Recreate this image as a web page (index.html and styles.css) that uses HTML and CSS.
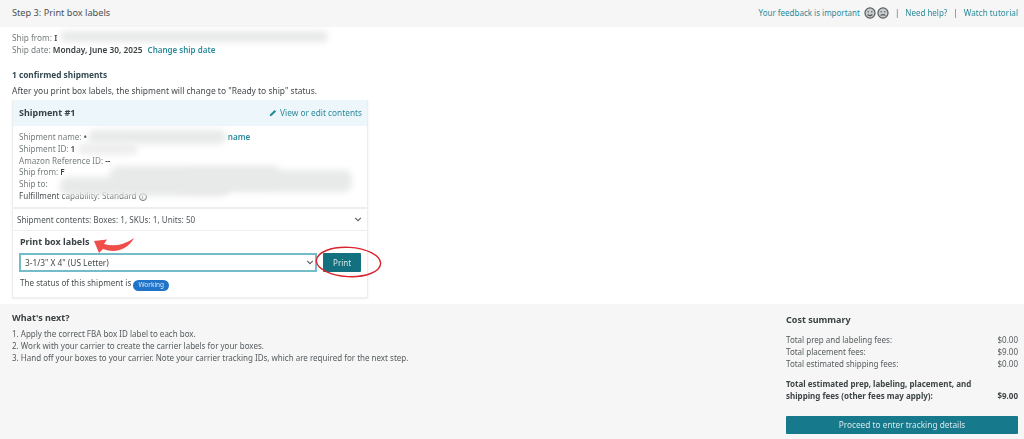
FILE: index.html
```html
<!DOCTYPE html>
<html lang="en">
<head>
<meta charset="utf-8">
<title>Step 3: Print box labels</title>
<link rel="stylesheet" href="styles.css">
</head>
<body>
<div class="page">
  <header class="topbar">
    <div class="step-title">Step 3: Print box labels</div>
    <nav class="top-links">
      <a>Your feedback is important</a>
      <span class="faces">
        <svg class="face" viewBox="0 0 10 10"><circle cx="5" cy="5" r="4.2"/><circle class="eye" cx="3.5" cy="4" r=".6"/><circle class="eye" cx="6.5" cy="4" r=".6"/><path d="M3 6.2q2 1.8 4 0"/></svg>
        <svg class="face" viewBox="0 0 10 10"><circle cx="5" cy="5" r="4.2"/><circle class="eye" cx="3.5" cy="4" r=".6"/><circle class="eye" cx="6.5" cy="4" r=".6"/><path d="M3 7.2q2-1.8 4 0"/></svg>
      </span>
      <span class="sep">|</span>
      <a>Need help?</a>
      <span class="sep">|</span>
      <a class="watch">Watch tutorial</a>
    </nav>
  </header>

  <main class="content">
    <div class="ship-meta">
      <div><span class="muted">Ship from:</span> <span class="strong">I</span></div>
      <div><span class="muted">Ship date:</span> <span class="strong">Monday, June 30, 2025</span> <a class="link-strong">Change ship date</a></div>
    </div>
    <h2 class="confirmed">1 confirmed shipments</h2>
    <p class="intro">After you print box labels, the shipment will change to "Ready to ship" status.</p>

    <section class="card">
      <div class="card-head">
        <span class="card-title">Shipment #1</span>
        <a class="edit">
          <svg class="pencil" viewBox="0 0 10 10"><path d="M1 9l.5-2.4L7 1.1 8.900 3 3.400 8.500z"/></svg>
          View or edit contents
        </a>
      </div>
      <div class="details">
        <div class="detail-line"><span class="muted">Shipment name:</span> <span class="strong">•</span> <a class="name-link">name</a></div>
        <div class="detail-line"><span class="muted">Shipment ID:</span> <span class="strong">1</span></div>
        <div class="detail-line"><span class="muted">Amazon Reference ID:</span> <span class="strong">--</span></div>
        <div class="detail-line"><span class="muted">Ship from:</span> <span class="strong">F</span></div>
        <div class="detail-line"><span class="muted">Ship to:</span></div>
        <div class="detail-line capability">Fulfillment capability: Standard <span class="info">i</span></div>
      </div>
      <div class="contents-row">
        <span>Shipment contents: Boxes: 1, SKUs: 1, Units: 50</span>
        <svg class="chev" viewBox="0 0 10 6"><path d="M1.500 1L5 4.500 8.500 1"/></svg>
      </div>
      <div class="print-box">
        <h3 class="print-title">Print box labels</h3>
        <div class="print-row">
          <div class="select">
            <span>3-1/3" X 4" (US Letter)</span>
            <svg class="chev" viewBox="0 0 10 6"><path d="M1.500 1L5 4.500 8.500 1"/></svg>
          </div>
          <button class="print-btn">Print</button>
        </div>
        <div class="status"><span>The status of this shipment is</span><span class="badge">Working</span></div>
      </div>
    </section>
  </main>

  <footer class="bottom">
    <div class="next">
      <h3 class="next-title">What's next?</h3>
      <ol class="steps">
        <li>1. Apply the correct FBA box ID label to each box.</li>
        <li>2. Work with your carrier to create the carrier labels for your boxes.</li>
        <li>3. Hand off your boxes to your carrier. Note your carrier tracking IDs, which are required for the next step.</li>
      </ol>
    </div>
    <aside class="cost">
      <h3 class="cost-title">Cost summary</h3>
      <div class="cost-row"><span>Total prep and labeling fees:</span><span>$0.00</span></div>
      <div class="cost-row"><span>Total placement fees:</span><span>$9.00</span></div>
      <div class="cost-row"><span>Total estimated shipping fees:</span><span>$0.00</span></div>
      <div class="cost-total"><span>Total estimated prep, labeling, placement, and shipping fees (other fees may apply):</span><span>$9.00</span></div>
      <button class="proceed">Proceed to enter tracking details</button>
    </aside>
  </footer>

  <div class="smear smear-from"></div>
  <div class="smear smear-name"></div>
  <div class="smear smear-id"></div>
  <div class="smear smear-addr"></div>
  <div class="smear smear-addr2"></div>
  <div class="smear smear-addr3"></div>
  <svg class="annot annot-arrow" viewBox="0 0 44 20"><path d="M2 5L15 3.500 12 8C22 11 32 9 42 2 36 13 24 18 11 13L7 17z"/></svg>
  <svg class="annot annot-ring" viewBox="0 0 72 36"><ellipse cx="36" cy="18" rx="34" ry="15.500" transform="rotate(3 36 18)"/></svg>
</div>
</body>
</html>
```
FILE: styles.css
```css
* { box-sizing: border-box; }
html, body { margin: 0; padding: 0; }
body {
  font-family: "Noto Sans", "Open Sans", sans-serif;
  font-size: 8.450px;
  line-height: 12px;
  color: #44494b;
  background: #fff;
}
.page { position: relative; width: 1024px; height: 439px; overflow: hidden; display: flex; flex-direction: column; filter: blur(.4px); }
h2, h3, p, ol { margin: 0; padding: 0; }
ol { list-style: none; }
a { color: #2b8a9a; }
.muted { color: #767d7f; }
.strong { font-weight: 600; color: #3a4042; }

.topbar { height: 27px; flex: none; background: #f6f6f6; padding: 0 6px 2px 12px; display: flex; align-items: center; justify-content: space-between; }
.step-title { font-size: 9.200px; color: #4a5052; }
.top-links { display: flex; align-items: center; gap: 6px; font-size: 8px; }
.watch { font-size: 8.200px; }
.faces { display: flex; gap: 1px; margin-left: -2px; }
.face { width: 12px; height: 12px; fill: #c9cbcc; stroke: #555b5d; stroke-width: 1; }
.face path { fill: none; }
.face .eye { fill: #555b5d; stroke: none; }
.sep { color: #666; }

.content { flex: none; height: 277px; padding: 5px 12px 0; }
.ship-meta { line-height: 12px; font-size: 8.280px; }
.link-strong { font-weight: 600; margin-left: 3px; font-size: 8px; }
.confirmed { font-size: 8.300px; font-weight: 700; color: #34494f; margin-top: 13px; line-height: 12px; }
.intro { margin-top: 4px; line-height: 12px; }

.card { width: 356px; height: 198px; margin-top: 3px; border: 1px solid #eceeee; border-top: 0; box-shadow: 0 1px 2px rgba(0,0,0,.08); display: flex; flex-direction: column; }
.card-head { height: 26px; flex: none; background: #edf6fb; padding: 0 5px 0 6px; display: flex; align-items: center; justify-content: space-between; }
.card-title { font-size: 9px; font-weight: 700; color: #3b4244; }
.edit { display: flex; align-items: center; gap: 3px; font-size: 8.300px; }
.pencil { width: 8px; height: 8px; fill: #2b8a9a; }
.details { height: 83px; flex: none; padding: 5px 6px 0; border-bottom: 2px solid #eeeeee; font-size: 8.100px; }
.detail-line { height: 11.800px; line-height: 12px; white-space: nowrap; }
.name-link { font-weight: 600; margin-left: 139px; }
.capability { color: #4a5052; }
.info { display: inline-flex; align-items: center; justify-content: center; width: 8px; height: 8px; border: 1px solid #666; border-radius: 50%; font-size: 6px; line-height: 1; }
.contents-row { height: 22px; flex: none; padding: 0 5px 0 4px; display: flex; align-items: center; justify-content: space-between; border-bottom: 1px solid #eeeeee; color: #50575a; font-size: 8.150px; }
.chev { width: 8px; height: 5px; fill: none; stroke: #555b5d; stroke-width: 1.300; flex: none; }
.print-box { padding: 5px 6px 0 6px; }
.print-title { font-size: 9px; font-weight: 700; color: #3b4244; line-height: 12px; margin-left: 1px; }
.print-row { display: flex; gap: 6px; margin-top: 5px; }
.select { width: 300px; height: 19px; border: 2px solid #74bcc7; padding: 0 1px 0 4px; display: flex; align-items: center; justify-content: space-between; color: #444a4c; font-size: 8.300px; }
.print-btn { width: 38px; height: 19px; margin: 0; padding: 0; border: 0; border-radius: 1px; background: #12707f; color: #d8e8ea; font: inherit; font-size: 8px; }
.status { display: flex; align-items: center; margin-top: 4px; gap: 2px; height: 14px; color: #4a5052; font-size: 8.100px; padding-left: 1px; }
.badge { background: #1f73c9; color: #d9e9f8; font-size: 6.500px; line-height: 10px; height: 11px; width: 36px; text-align: center; border-radius: 6px; margin-top: 4px; }

.bottom { flex: 1; background: #f6f6f6; padding: 8px 6px 4px 12px; display: flex; justify-content: space-between; }
.next-title { font-size: 9px; font-weight: 700; color: #3b4244; line-height: 12px; }
.steps { margin-top: 4px; color: #555b5e; font-size: 8px; }
.cost { width: 232px; padding-top: 2px; color: #555b5e; }
.cost-title { font-size: 9px; font-weight: 700; color: #3b4244; line-height: 12px; margin-bottom: 8px; }
.cost-row { display: flex; justify-content: space-between; font-size: 8px; }
.cost-total { display: flex; justify-content: space-between; align-items: flex-end; font-weight: 700; font-size: 8px; margin-top: 8px; color: #3f4547; }
.cost-total span:first-child { width: 190px; }
.proceed { display: block; width: 232px; height: 18px; margin: 14px 0 0; padding: 0; border: 0; border-radius: 1px; background: #17798c; color: #d5e8ec; font: inherit; font-size: 8.300px; }

.smear { position: absolute; background: #e8e9e9; filter: blur(3px); border-radius: 8px; }
.smear-from { left: 60px; top: 31px; width: 268px; height: 11px; }
.smear-name { left: 88px; top: 130px; width: 138px; height: 14px; }
.smear-id { left: 78px; top: 143px; width: 60px; height: 12px; background: #eeeeee; }
.smear-addr { left: 110px; top: 166px; width: 170px; height: 22px; }
.smear-addr2 { left: 60px; top: 177px; width: 170px; height: 19px; }
.smear-addr3 { left: 180px; top: 170px; width: 172px; height: 22px; }
.annot { position: absolute; overflow: visible; }
.annot-arrow { left: 92px; top: 236px; width: 44px; height: 20px; fill: #f04e4b; }
.annot-ring { left: 313px; top: 245px; width: 71px; height: 34px; fill: none; stroke: #d9232d; stroke-width: 1.500; }
```
